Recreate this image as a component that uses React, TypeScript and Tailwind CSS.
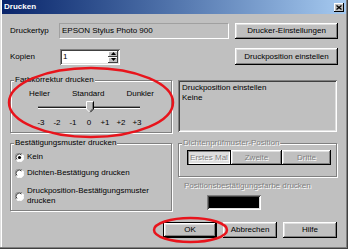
import React from "react";

const raised =
  "shadow-[inset_-1px_-1px_#000,inset_1px_1px_#fff,inset_-2px_-2px_#808080,inset_2px_2px_#dfdfdf]";
const sunken =
  "shadow-[inset_1px_1px_#808080,inset_-1px_-1px_#fff,inset_2px_2px_#404040,inset_-2px_-2px_#dfdfdf]";
const etched = "text-[#808080] [text-shadow:1px_1px_0_#fff]";

function Button({
  children,
  className = "",
  isDefault = false,
}: {
  children: React.ReactNode;
  className?: string;
  isDefault?: boolean;
}) {
  if (isDefault) {
    return (
      <div className={`border border-black ${className}`}>
        <div className={`flex h-full w-full items-center justify-center bg-[#c0c0c0] ${raised}`}>
          {children}
        </div>
      </div>
    );
  }
  return (
    <div className={`flex items-center justify-center bg-[#c0c0c0] ${raised} ${className}`}>
      {children}
    </div>
  );
}

function GroupBox({
  label,
  disabled = false,
  className = "",
  children,
}: {
  label: string;
  disabled?: boolean;
  className?: string;
  children?: React.ReactNode;
}) {
  return (
    <div
      className={`relative border border-[#808080] shadow-[inset_1px_1px_#fff,1px_1px_#fff] ${className}`}
    >
      <span
        className={`absolute -top-[6px] left-[3px] bg-[#c0c0c0] px-[1px] leading-[10px] ${
          disabled ? etched : ""
        }`}
      >
        {label}
      </span>
      {children}
    </div>
  );
}

function Radio({ checked = false }: { checked?: boolean }) {
  return (
    <svg width="9" height="9" viewBox="0 0 9 9" className="shrink-0">
      <circle cx="4.5" cy="4.5" r="4" fill="#fff" />
      <path d="M1.2 7.3 A4 4 0 0 1 7.3 1.2" fill="none" stroke="#808080" strokeWidth="1" />
      <path d="M2 6.5 A3 3 0 0 1 6.5 2" fill="none" stroke="#404040" strokeWidth="1" />
      <path d="M7.6 1.6 A4 4 0 0 1 1.6 7.6" fill="none" stroke="#fff" strokeWidth="1" />
      {checked && <circle cx="4.5" cy="4.5" r="1.6" fill="#000" />}
    </svg>
  );
}

function SpinArrow({ up }: { up?: boolean }) {
  return (
    <div className="flex h-[6px] w-[10px] items-center justify-center bg-[#c0c0c0] shadow-[inset_-1px_-1px_#404040,inset_1px_1px_#fff]">
      <svg width="5" height="3" viewBox="0 0 5 3">
        <path d={up ? "M2.5 0 L5 3 L0 3 Z" : "M0 0 L5 0 L2.5 3 Z"} fill="#000" />
      </svg>
    </div>
  );
}

function TitleBar() {
  return (
    <div className="flex h-[14px] items-center justify-between bg-linear-to-r from-[#0a246a] to-[#a6caf0] pl-[2px] pr-[2px]">
      <span className="text-[8px] font-bold leading-[10px] text-white">Drucken</span>
      <div className="flex h-[9px] w-[10px] items-center justify-center bg-[#c0c0c0] shadow-[inset_-1px_-1px_#000,inset_1px_1px_#fff]">
        <svg width="6" height="5" viewBox="0 0 6 5">
          <path d="M0.5 0.5 L5.5 4.5 M5.5 0.5 L0.5 4.5" stroke="#000" strokeWidth="1.3" />
        </svg>
      </div>
    </div>
  );
}

export default function App() {
  const ticks = ["-3", "-2", "-1", "0", "+1", "+2", "+3"];

  return (
    <div className="relative h-[249px] w-[348px] overflow-hidden bg-[#c0c0c0] px-[2px] pb-[2px] font-['Liberation_Sans',Arial,sans-serif] text-[8px] leading-[10px] text-black shadow-[inset_-1px_-1px_#404040,inset_-2px_-2px_#808080,inset_1px_0_#dfdfdf,inset_2px_0_#fff]">
      <TitleBar />

      <div className="pl-[8px] pr-[8px]">
        {/* Druckertyp */}
        <div className="mt-[9px] flex h-[16px] items-center">
          <span className="w-[49px]">Druckertyp</span>
          <div className="flex h-[16px] w-[170px] items-center border border-b-white border-l-[#a0a0a0] border-r-white border-t-[#a0a0a0] pl-[2px]">
            EPSON Stylus Photo 900
          </div>
          <Button className="ml-auto h-[16px] w-[103px]">Drucker-Einstellungen</Button>
        </div>

        {/* Kopien */}
        <div className="mt-[9px] flex h-[17px] items-center">
          <span className="w-[50px]">Kopien</span>
          <div className={`flex h-[16px] w-[60px] items-center justify-between bg-white p-[2px] ${sunken}`}>
            <span className="pl-[1px]">1</span>
            <div className="flex flex-col">
              <SpinArrow up />
              <SpinArrow />
            </div>
          </div>
          <Button className="ml-auto h-[17px] w-[103px]">Druckposition einstellen</Button>
        </div>

        {/* Farbkorrektur + Info */}
        <div className="mt-[15px] flex gap-[6px]">
          <GroupBox label="Farbkorrektur drucken" className="h-[53px] w-[162px]">
            <div className="flex justify-between pl-[18px] pr-[17px] pt-[8px]">
              <span>Heller</span>
              <span>Standard</span>
              <span>Dunkler</span>
            </div>
            <div className="relative ml-[27px] mt-[2px] h-[12px] w-[102px]">
              <div className="absolute left-0 right-0 top-[5px] h-[3px] border-b border-t border-b-white border-t-[#808080] bg-[#202020]" />
              <svg
                width="8"
                height="12"
                viewBox="0 0 8 12"
                className="absolute left-[48px] top-0"
              >
                <path d="M0.5 0.5 H7.5 V8 L4 11.5 L0.5 8 Z" fill="#c0c0c0" />
                <path d="M0.5 8 V0.5 H7" fill="none" stroke="#fff" strokeWidth="1" />
                <path d="M7.5 0.5 V8 L4 11.5" fill="none" stroke="#000" strokeWidth="1" />
                <path d="M6.5 1.5 V7.6 L4 10.2" fill="none" stroke="#808080" strokeWidth="1" />
                <path d="M0.5 8 L4 11.5" fill="none" stroke="#fff" strokeWidth="1" />
              </svg>
            </div>
            <div className="ml-[22px] mt-[5px] grid grid-cols-[repeat(7,16px)] text-center">
              {ticks.map((t) => (
                <span key={t}>{t}</span>
              ))}
            </div>
          </GroupBox>

          <div className={`h-[52px] w-[159px] pl-[4px] pt-[3px] ${sunken}`}>
            <div>Druckposition einstellen</div>
            <div>Keine</div>
          </div>
        </div>

        {/* Bestätigungsmuster + Position */}
        <div className="mt-[10px] flex items-start gap-[6px]">
          <GroupBox label="Bestätigungsmuster drucken" className="h-[68px] w-[162px]">
            <div className="flex flex-col pl-[4px] pt-[8px]">
              <div className="flex items-center gap-[3px]">
                <Radio checked />
                <span>Kein</span>
              </div>
              <div className="mt-[6px] flex items-center gap-[3px]">
                <Radio />
                <span>Dichten-Bestätigung drucken</span>
              </div>
              <div className="mt-[8px] flex items-center gap-[3px]">
                <Radio />
                <span>
                  Druckposition-Bestätigungsmuster
                  <br />
                  drucken
                </span>
              </div>
            </div>
          </GroupBox>

          <div className="flex w-[159px] flex-col">
            <GroupBox label="Dichtenprüfmuster-Position" disabled className="h-[34px] w-[159px]">
              <div className="flex pl-[8px] pt-[6px]">
                <div className="h-[15px] w-[44px] border border-black">
                  <div className={`flex h-full w-full items-center justify-center bg-[#dedede] shadow-[inset_1px_1px_#808080,inset_-1px_-1px_#fff] ${etched}`}>
                    Erstes Mal
                  </div>
                </div>
                <Button className={`h-[15px] w-[51px] ${etched}`}>Zweite</Button>
                <Button className={`h-[15px] w-[49px] ${etched}`}>Dritte</Button>
              </div>
            </GroupBox>
            <span className={`mt-[4px] pl-[6px] ${etched}`}>Positionsbestätigungsfarbe drucken</span>
            <div className={`ml-[29px] mt-[4px] h-[15px] w-[54px] bg-black ${sunken}`} />
          </div>
        </div>

        {/* Dialog buttons */}
        <div className="mt-[11px] flex justify-end gap-[6px] pr-[1px]">
          <Button isDefault className="h-[16px] w-[54px]">
            OK
          </Button>
          <Button className="h-[16px] w-[54px]">Abbrechen</Button>
          <Button className="h-[16px] w-[54px]">Hilfe</Button>
        </div>
      </div>

      {/* red annotation marks */}
      <svg
        width="348"
        height="249"
        viewBox="0 0 348 249"
        className="pointer-events-none absolute left-0 top-0"
      >
        <ellipse cx="91" cy="102.5" rx="82" ry="34.5" fill="none" stroke="#e8141c" strokeWidth="2.5" />
        <ellipse cx="190.5" cy="230" rx="36.5" ry="12" fill="none" stroke="#e8141c" strokeWidth="2.5" />
      </svg>
    </div>
  );
}
